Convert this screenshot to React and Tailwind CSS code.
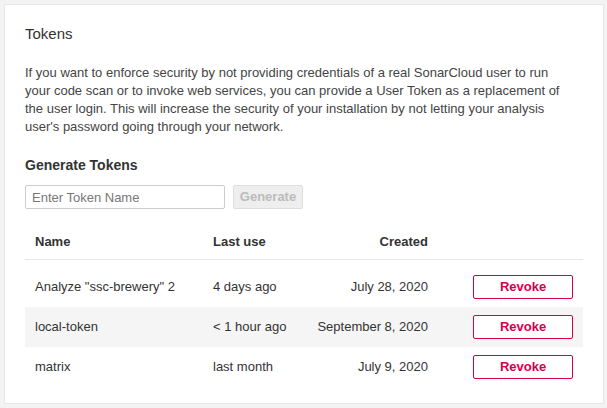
import React from 'react';

const tokens = [
  { name: 'Analyze "ssc-brewery" 2', lastUse: '4 days ago', created: 'July 28, 2020' },
  { name: 'local-token', lastUse: '< 1 hour ago', created: 'September 8, 2020' },
  { name: 'matrix', lastUse: 'last month', created: 'July 9, 2020' },
];

export default function App() {
  return (
    <div className="bg-[#f3f3f3] min-h-screen p-[4px] font-['Liberation_Sans',Arial,sans-serif] text-[#333]">
      <div className="w-[600px] h-[400px] bg-white border border-[#e6e6e6] rounded-[2px] pt-[19px] px-[20px]">
        {/* Header */}
        <h2 className="text-[15px] leading-[20px] font-normal">Tokens</h2>

        <p className="mt-[20px] max-w-[545px] text-[13px] leading-[18px] text-[#444]">
          If you want to enforce security by not providing credentials of a real SonarCloud user to run
          your code scan or to invoke web services, you can provide a User Token as a replacement of
          the user login. This will increase the security of your installation by not letting your analysis
          user's password going through your network.
        </p>

        {/* Generate form */}
        <h3 className="mt-[19px] text-[14px] leading-[20px] font-bold">Generate Tokens</h3>
        <div className="mt-[10px] flex items-center gap-[8px]">
          <input
            type="text"
            placeholder="Enter Token Name"
            className="w-[200px] h-[24px] px-[6px] border border-[#cccccc] rounded-[2px] text-[13px] text-[#333] placeholder:text-[#777] outline-none"
          />
          <button
            disabled
            className="w-[70px] h-[24px] bg-[#eeeeee] border border-[#dddddd] rounded-[2px] text-[13px] font-bold text-[#bbbbbb]"
          >
            Generate
          </button>
        </div>

        {/* Table */}
        <div className="mt-[14px] text-[13px] leading-[18px]">
          <div className="grid grid-cols-[178px_105px_130px_1fr] pt-[10px] pb-[8px] border-b border-[#e6e6e6] font-bold">
            <div className="pl-[10px]">Name</div>
            <div className="pl-[10px]">Last use</div>
            <div className="pr-[10px] text-right">Created</div>
            <div></div>
          </div>
          <div className="pt-[7px]">
            {tokens.map((t, i) => (
              <div
                key={t.name}
                className={`grid grid-cols-[178px_105px_130px_1fr] h-[40px] ${i % 2 === 1 ? 'bg-[#f5f5f5]' : ''}`}
              >
                <div className="pl-[10px] pt-[11px]">{t.name}</div>
                <div className="pl-[10px] pt-[11px]">{t.lastUse}</div>
                <div className="pr-[10px] pt-[11px] text-right">{t.created}</div>
                <div className="flex items-center justify-end pr-[10px]">
                  <button className="w-[100px] h-[24px] bg-white border border-[#d4004b] rounded-[2px] text-[13px] font-bold text-[#d4004b]">
                    Revoke
                  </button>
                </div>
              </div>
            ))}
          </div>
        </div>
      </div>
    </div>
  );
}
